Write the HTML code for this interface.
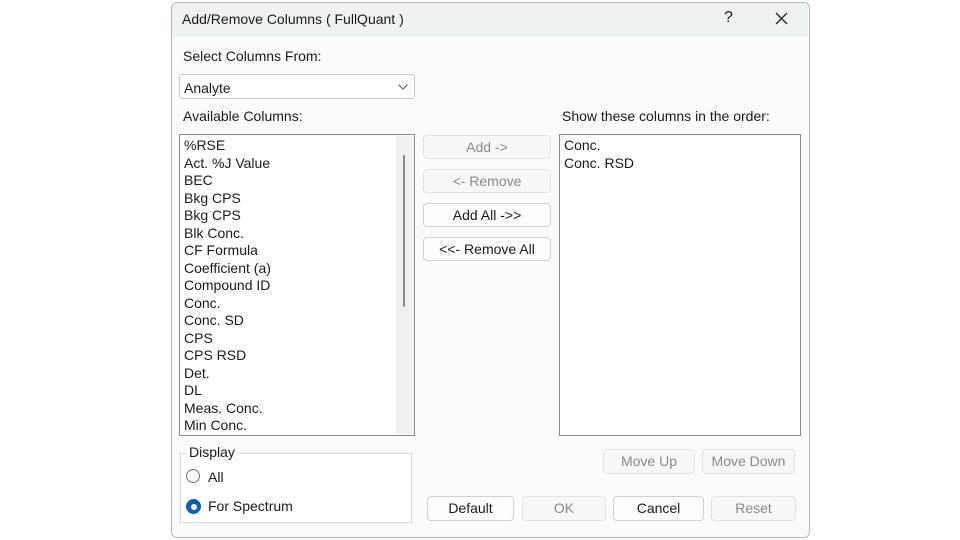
<!DOCTYPE html><html><head><style>
body{margin:0;width:960px;height:540px;background:#fff;position:relative;overflow:hidden;font-family:"Liberation Sans",sans-serif;font-size:14px;color:#1a1a1a}
.a{position:absolute}
.dlg{left:171px;top:2px;width:637px;height:534px;border:1px solid #b8b8b8;border-radius:6px;background:#fbfbfb}
.title{left:172px;top:3px;width:636px;height:34px;background:#eef3f0;border-radius:6px 6px 0 0}
.btn{position:absolute;border:1px solid #d0d0d0;border-radius:4px;background:#fdfdfd;text-align:center;line-height:22px;box-sizing:border-box}
.dis{background:#f7f7f7;color:#8a8a8a;border-color:#e2e2e2}
.list{background:#fff;border:1px solid #8a8a8a;box-sizing:border-box}
.list div{height:17.5px;line-height:17.5px;padding-left:4px}
</style></head><body>
<div class="a dlg"></div><div class="a title"></div>
<div class="a" style="left:182px;top:11px">Add/Remove Columns ( FullQuant )</div>
<div class="a" style="left:724px;top:9px;font-size:16px">?</div>
<svg class="a" style="left:775px;top:12px" width="13" height="13"><path d="M1 1L12 12M12 1L1 12" stroke="#222" stroke-width="1.3"/></svg>
<div class="a" style="left:183px;top:48px">Select Columns From:</div>
<div class="a" style="left:179px;top:74px;width:236px;height:25px;border:1px solid #c8c8c8;border-radius:3px;background:#fff;box-sizing:border-box;padding:5px 0 0 4px">Analyte
<svg class="a" style="right:6px;top:9px" width="10" height="6"><path d="M0.5 0.5L5 5L9.5 0.5" fill="none" stroke="#555"/></svg></div>
<div class="a" style="left:183px;top:108px">Available Columns:</div>
<div class="a" style="left:562px;top:108px">Show these columns in the order:</div>
<div class="a list" style="left:179px;top:134px;width:236px;height:302px;padding-top:2px">
<div>%RSE</div><div>Act. %J Value</div><div>BEC</div><div>Bkg CPS</div><div>Bkg CPS</div><div>Blk Conc.</div><div>CF Formula</div><div>Coefficient (a)</div><div>Compound ID</div><div>Conc.</div><div>Conc. SD</div><div>CPS</div><div>CPS RSD</div><div>Det.</div><div>DL</div><div>Meas. Conc.</div><div>Min Conc.</div>
<span class="a" style="left:216px;top:1px;width:18px;height:298px;background:#f0f0f0"></span>
<span class="a" style="left:223px;top:20px;width:2px;height:152px;background:#8a8a8a;border-radius:1px"></span>
</div>
<div class="a list" style="left:559px;top:134px;width:242px;height:302px;padding-top:2px"><div>Conc.</div><div>Conc. RSD</div></div>
<div class="btn dis" style="left:423px;top:135px;width:128px;height:24px">Add -&gt;</div>
<div class="btn dis" style="left:423px;top:169px;width:128px;height:24px">&lt;- Remove</div>
<div class="btn" style="left:423px;top:203px;width:128px;height:24px">Add All -&gt;&gt;</div>
<div class="btn" style="left:423px;top:237px;width:128px;height:24px">&lt;&lt;- Remove All</div>
<div class="a" style="left:180px;top:453px;width:232px;height:70px;border:1px solid #d8d8d8;background:#fff;box-sizing:border-box"></div>
<div class="a" style="left:186px;top:444px;background:#fbfbfb;padding:0 3px">Display</div>
<div class="a" style="left:186px;top:469px;width:14px;height:14px;border:1px solid #777;border-radius:50%;box-sizing:border-box;background:#f8f8f8"></div>
<div class="a" style="left:208px;top:469px">All</div>
<div class="a" style="left:186px;top:499px;width:15px;height:15px;border-radius:50%;background:#0a5fb4"><span class="a" style="left:4.5px;top:4.5px;width:6px;height:6px;border-radius:50%;background:#fff"></span></div>
<div class="a" style="left:208px;top:498px">For Spectrum</div>
<div class="btn dis" style="left:603px;top:449px;width:92px;height:25px">Move Up</div>
<div class="btn dis" style="left:702px;top:449px;width:93px;height:25px">Move Down</div>
<div class="btn" style="left:427px;top:496px;width:87px;height:25px">Default</div>
<div class="btn dis" style="left:522px;top:496px;width:84px;height:25px">OK</div>
<div class="btn" style="left:613px;top:496px;width:91px;height:25px">Cancel</div>
<div class="btn dis" style="left:711px;top:496px;width:85px;height:25px">Reset</div>
</body></html>
